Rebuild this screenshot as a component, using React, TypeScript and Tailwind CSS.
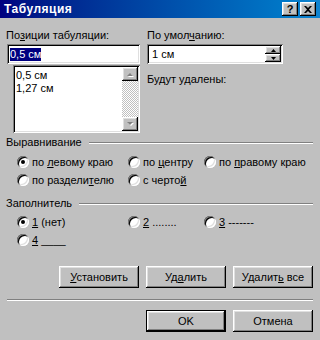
import React from "react";

const raised =
  "shadow-[inset_-1px_-1px_0_#000,inset_1px_1px_0_#fff,inset_-2px_-2px_0_#808080,inset_2px_2px_0_#dfdfdf]";
const sunken =
  "shadow-[inset_1px_1px_0_#808080,inset_-1px_-1px_0_#fff,inset_2px_2px_0_#000,inset_-2px_-2px_0_#dfdfdf]";

function Radio({ checked }: { checked?: boolean }) {
  return (
    <span className="flex w-[12px] h-[12px] shrink-0 items-center justify-center rounded-full bg-white shadow-[inset_1px_1px_0_#808080,inset_-1px_-1px_0_#fff,inset_2px_2px_0_#000,inset_-2px_-2px_0_#dfdfdf]">
      {checked && <span className="block w-[4px] h-[4px] rounded-full bg-black" />}
    </span>
  );
}

function RadioItem({
  checked,
  children,
  w,
}: {
  checked?: boolean;
  children: React.ReactNode;
  w: string;
}) {
  return (
    <div className={"flex items-center gap-[3px] " + w}>
      <Radio checked={checked} />
      <span className="whitespace-nowrap">{children}</span>
    </div>
  );
}

function GroupHeader({ label }: { label: string }) {
  return (
    <div className="flex items-center h-[13px]">
      <span className="pl-[-1px] -ml-[1px]">{label}</span>
      <div className="flex-1 ml-[7px] h-[2px] border-t border-t-[#808080] border-b border-b-white" />
    </div>
  );
}

function Btn({
  children,
  isDefault,
}: {
  children: React.ReactNode;
  isDefault?: boolean;
}) {
  return (
    <div
      className={
        "flex w-[80px] h-[22px] items-center justify-center bg-[#c0c0c0] " +
        raised +
        (isDefault ? " border border-black" : "")
      }
    >
      <span className="whitespace-nowrap">{children}</span>
    </div>
  );
}

function ArrowUp({ disabled }: { disabled?: boolean }) {
  if (disabled)
    return (
      <svg width="8" height="5" viewBox="0 0 8 5">
        <polygon points="4,1 7,4 1,4" fill="#ffffff" transform="translate(1,1)" />
        <polygon points="4,1 7,4 1,4" fill="#808080" />
      </svg>
    );
  return (
    <svg width="5" height="3" viewBox="0 0 5 3">
      <polygon points="2.5,0 5,3 0,3" fill="#000" />
    </svg>
  );
}

function ArrowDown({ disabled }: { disabled?: boolean }) {
  if (disabled)
    return (
      <svg width="8" height="5" viewBox="0 0 8 5">
        <polygon points="1,0 7,0 4,3" fill="#ffffff" transform="translate(1,1)" />
        <polygon points="1,0 7,0 4,3" fill="#808080" />
      </svg>
    );
  return (
    <svg width="5" height="3" viewBox="0 0 5 3">
      <polygon points="0,0 5,0 2.5,3" fill="#000" />
    </svg>
  );
}

export default function App() {
  return (
    <div className="w-[320px] h-[340px] overflow-hidden bg-[#c0c0c0] text-black text-[11px] leading-[13px] font-['Liberation_Sans',Arial,sans-serif]">
      {/* Title bar */}
      <div className="flex h-[18px] items-center bg-linear-to-r from-[#000080] to-[#1084d0] pl-[4px] pr-[4px]">
        <span className="flex-1 text-[12px] font-bold text-white tracking-[0.5px]">
          Табуляция
        </span>
        <div className="flex gap-[2px]">
          <div
            className={
              "flex w-[16px] h-[14px] items-center justify-center bg-[#c0c0c0] text-[11px] font-bold leading-none " +
              raised
            }
          >
            ?
          </div>
          <div
            className={
              "flex w-[16px] h-[14px] items-center justify-center bg-[#c0c0c0] " +
              raised
            }
          >
            <svg width="8" height="7" viewBox="0 0 8 7">
              <path
                d="M0 0h2l2 2 2-2h2L5 3.5 8 7H6L4 5 2 7H0l3-3.5z"
                fill="#000"
              />
            </svg>
          </div>
        </div>
      </div>

      {/* Body */}
      <div className="flex flex-col px-[7px]">
        {/* Top section */}
        <div className="flex mt-[11px]">
          <div className="flex flex-col w-[133px]">
            <span className="-ml-[1px] whitespace-nowrap">
              По<span className="underline">з</span>иции табуляции:
            </span>
            <div
              className={
                "mt-[2px] flex h-[20px] items-center bg-white pl-[3px] " + sunken
              }
            >
              <span className="bg-[#000080] text-white px-[0px]">0,5 см</span>
            </div>
            <div
              className={
                "ml-[6px] mt-[1px] flex h-[68px] bg-white p-[2px] " + sunken
              }
            >
              <div className="flex flex-1 flex-col pl-[1px] pt-[2px]">
                <span>0,5 см</span>
                <span>1,27 см</span>
              </div>
              <div className="flex w-[16px] flex-col">
                <div
                  className={
                    "flex h-[14px] items-center justify-center bg-[#c0c0c0] " +
                    raised
                  }
                >
                  <ArrowUp disabled />
                </div>
                <div className="flex-1 bg-[repeating-conic-gradient(#c0c0c0_0%_25%,#ffffff_0%_50%)] bg-[length:2px_2px]" />
                <div
                  className={
                    "flex h-[14px] items-center justify-center bg-[#c0c0c0] " +
                    raised
                  }
                >
                  <ArrowDown disabled />
                </div>
              </div>
            </div>
          </div>

          <div className="flex flex-col ml-[7px] w-[136px]">
            <span className="whitespace-nowrap">
              По умол<span className="underline">ч</span>анию:
            </span>
            <div
              className={
                "mt-[2px] flex h-[20px] items-center bg-white p-[2px] " + sunken
              }
            >
              <span className="flex-1 pl-[3px]">1 см</span>
              <div className="flex h-full w-[16px] flex-col">
                <div
                  className={
                    "flex flex-1 items-center justify-center bg-[#c0c0c0] " +
                    raised
                  }
                >
                  <ArrowUp />
                </div>
                <div
                  className={
                    "flex flex-1 items-center justify-center bg-[#c0c0c0] " +
                    raised
                  }
                >
                  <ArrowDown />
                </div>
              </div>
            </div>
            <span className="mt-[9px] whitespace-nowrap">Будут удалены:</span>
          </div>
        </div>

        {/* Alignment group */}
        <div className="mt-[3px]">
          <GroupHeader label="Выравнивание" />
          <div className="mt-[4px] pl-[10px]">
            <div className="flex h-[18px] items-center">
              <RadioItem checked w="w-[111px]">
                по <span className="underline">л</span>евому краю
              </RadioItem>
              <RadioItem w="w-[76px]">
                по <span className="underline">ц</span>ентру
              </RadioItem>
              <RadioItem w="w-[100px]">
                по <span className="underline">п</span>равому краю
              </RadioItem>
            </div>
            <div className="flex h-[18px] items-center">
              <RadioItem w="w-[111px]">
                по раздели<span className="underline">т</span>елю
              </RadioItem>
              <RadioItem w="w-[76px]">
                с черто<span className="underline">й</span>
              </RadioItem>
            </div>
          </div>
        </div>

        {/* Leader group */}
        <div className="mt-[8px]">
          <GroupHeader label="Заполнитель" />
          <div className="mt-[3px] pl-[10px]">
            <div className="flex h-[18px] items-center">
              <RadioItem checked w="w-[111px]">
                <span className="underline">1</span> (нет)
              </RadioItem>
              <RadioItem w="w-[76px]">
                <span className="underline">2</span> ........
              </RadioItem>
              <RadioItem w="w-[100px]">
                <span className="underline">3</span> -------
              </RadioItem>
            </div>
            <div className="flex h-[18px] items-center">
              <RadioItem w="w-[111px]">
                <span className="underline">4</span> ____
              </RadioItem>
            </div>
          </div>
        </div>

        {/* Action buttons */}
        <div className="mt-[17px] flex justify-end gap-[7px]">
          <Btn>
            <span className="underline">У</span>становить
          </Btn>
          <Btn>
            Уд<span className="underline">а</span>лить
          </Btn>
          <Btn>
            Удалит<span className="underline">ь</span> все
          </Btn>
        </div>

        <div className="mt-[11px] h-[2px] border-t border-t-[#808080] border-b border-b-white" />

        <div className="mt-[9px] flex justify-end gap-[7px]">
          <Btn isDefault>OK</Btn>
          <Btn>Отмена</Btn>
        </div>
      </div>
    </div>
  );
}
